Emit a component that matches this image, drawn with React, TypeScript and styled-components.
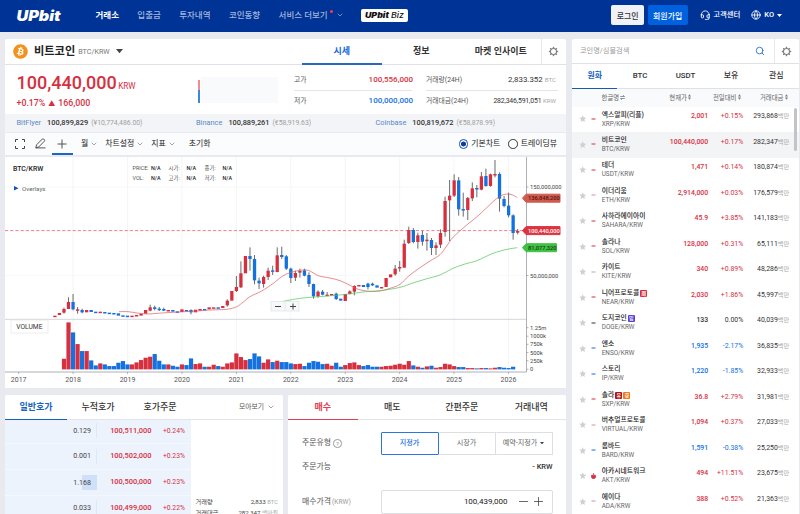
import React from "react";
import styled, { createGlobalStyle, css } from "styled-components";
import { Headset, Globe, ChevronDown, Search } from "lucide-react";
import { FaBitcoin } from "react-icons/fa";

const RED = "#d6303f";
const BLUE = "#1371e0";
const FONT = `Roboto, "Noto Sans CJK KR", sans-serif`;

const GlobalStyle = createGlobalStyle`
  * { box-sizing: border-box; }
  body { margin: 0; overflow: hidden; background: #e8eaef; font-family: ${FONT}; color: #333; }
`;

const Page = styled.div`
  width: 800px;
  height: 514px;
  overflow: hidden;
  background: #e8eaef;
  font-size: 6.8px;
  line-height: 10px;
  white-space: nowrap;
`;

/* ---------- Header ---------- */
const Header = styled.header`
  height: 32px;
  padding: 0 18px 0 16px;
  background: #003396;
  display: flex;
  align-items: center;
  color: #fff;
`;
const Logo = styled.svg`
  width: 47px;
  height: 20px;
  margin-right: 32.5px;
  overflow: visible;
  fill: #fff;
`;
const Nav = styled.nav`
  display: flex;
  gap: 18.4px;
  font-size: 8.5px;
  margin-top: -3px;
`;
const NavItem = styled.a<{ $active?: boolean }>`
  color: ${(p) => (p.$active ? "#fff" : "#a3b6dc")};
  font-weight: ${(p) => (p.$active ? 700 : 500)};
  display: flex;
  align-items: center;
`;
const NewDot = styled.i`
  width: 3px;
  height: 3px;
  margin: -7px 3px 0 2px;
  border-radius: 50%;
  background: #ee4052;
`;
const BizBadge = styled.svg`
  width: 47px;
  height: 13px;
  margin: -2px 0 0 17px;
  border-radius: 2px;
  background: #fff;
`;
const HeaderTools = styled.div`
  margin: -2px 0 0 auto;
  display: flex;
  align-items: center;
  font-size: 7.4px;
  font-weight: 500;
`;
const HeaderButton = styled.button<{ $primary?: boolean }>`
  width: ${(p) => (p.$primary ? 40 : 33)}px;
  height: 20px;
  margin-right: ${(p) => (p.$primary ? 12 : 3.5)}px;
  padding: 0;
  border: 0;
  border-radius: 2px;
  background: ${(p) => (p.$primary ? "#0061df" : "#f0f2f7")};
  color: ${(p) => (p.$primary ? "#fff" : "#333")};
  font: 500 7.9px ${FONT};
`;
const ToolLink = styled.span`
  display: flex;
  align-items: center;
  gap: 3px;
  margin-right: 11px;
  &:last-child { margin-right: 0; }
`;

/* ---------- Layout ---------- */
const Columns = styled.main`
  display: grid;
  grid-template-columns: 561px 227px;
  column-gap: 6px;
  padding: 7px 0 0 5px;
  height: 482px;
`;
const MainColumn = styled.div`
  display: flex;
  flex-direction: column;
`;
const Card = styled.section`
  background: #fff;
  border-radius: 2px 2px 0 0;
`;

/* ---------- Coin title ---------- */
const TitleBar = styled.div`
  height: 26px;
  display: flex;
  border-bottom: 1px solid #dfe1e6;
`;
const CoinName = styled.div`
  width: 297px;
  padding-left: 8px;
  display: flex;
  align-items: center;
  font-size: 11.2px;
  font-weight: 500;
  color: #222;
  svg { flex: none; }
`;
const CoinLabel = styled.b`
  margin: 0 3px 0 6px;
  font-weight: 700;
`;
const CoinPair = styled.span`
  font-size: 7.2px;
  font-weight: 400;
  color: #777;
  margin: 1px 6px 0 0;
`;
const MainTab = styled.div<{ $active?: boolean }>`
  width: ${(p) => (p.$active ? 80 : 79.5)}px;
  height: 26px;
  line-height: 25px;
  text-align: center;
  font-size: 9px;
  font-weight: 700;
  color: ${(p) => (p.$active ? "#1368dc" : "#333")};
  border-bottom: ${(p) => (p.$active ? "2px solid #2a67be" : "0")};
`;
const GearCell = styled.div`
  width: 25.5px;
  border-left: 1px solid #e6e8ec;
  display: grid;
  place-items: center;
`;

/* ---------- Price summary ---------- */
const Summary = styled.div`
  height: 49px;
  display: flex;
`;
const PriceBlock = styled.div`
  width: 193px;
  padding: 8px 0 0 11.5px;
  color: ${RED};
`;
const BigPrice = styled.div`
  font-size: 18px;
  line-height: 20px;
  font-weight: 500;
`;
const BigUnit = styled.span`
  font-size: 8.2px;
  font-weight: 400;
  margin-left: 1.5px;
`;
const ChangeLine = styled.div`
  font-size: 8.8px;
  line-height: 14px;
  font-weight: 500;
  margin-top: 0;
  small { font-size: 7px; margin: 0 3px; }
`;
const RangeBar = styled.div`
  width: 1.6px;
  height: 23px;
  margin-top: 15px;
  background: linear-gradient(#ee8b93 44%, #3e86dc 44%);
`;
const SparkArea = styled.div`
  width: 77px;
  height: 26px;
  margin: 12px 16px 0 1.5px;
  background: #f9fafc;
`;
const Stats = styled.div`
  width: 118px;
  margin-right: 14px;
  &:last-child { width: 132px; margin: 0; }
`;
const Stat = styled.div`
  height: 20px;
  display: flex;
  justify-content: space-between;
  align-items: center;
  color: #555;
  &:first-child { height: 26px; padding-top: 5px; border-bottom: 1px solid #e3e5e9; }
`;
const StatValue = styled.span<{ $color?: string; $small?: boolean }>`
  color: ${(p) => p.$color ?? "#333"};
  font-size: ${(p) => (p.$color ? 8 : p.$small ? 6.9 : 7.9)}px;
  font-weight: ${(p) => (p.$color ? 500 : 400)};
  letter-spacing: ${(p) => (p.$small ? "-0.17px" : "0")};
  margin-right: ${(p) => (p.$color ? -1 : 2)}px;
  small { font-size: 6.2px; color: #aaa; letter-spacing: 0; }
`;

/* ---------- Foreign exchanges ---------- */
const ExchangeBar = styled.div`
  height: 18px;
  display: grid;
  grid-template-columns: 179.5px 179.5px 1fr;
  padding-left: 11.5px;
  align-items: center;
  background: #f3f4f7;
`;
const Exchange = styled.span`
  display: flex;
  gap: 6px;
  font-size: 7.4px;
  color: #5a8ac6;
  b { color: #333; font-weight: 500; }
  small { font-size: 6.85px; color: #a0a0a0; margin-left: -3px; }
`;

/* ---------- Chart toolbar ---------- */
const Toolbar = styled.div`
  height: 22.5px;
  margin-top: 0.5px;
  padding: 0 9px 0 9.5px;
  display: flex;
  align-items: center;
  background: #fbfcfe;
  font-size: 7.9px;
  color: #222;
`;
const ToolIcon = styled.span<{ $active?: boolean }>`
  width: 21.5px;
  height: 22.5px;
  display: grid;
  place-items: center;
  padding-top: 2px;
  border-bottom: 2px solid ${(p) => (p.$active ? "#1d66c4" : "transparent")};
  margin-right: ${(p) => (p.$active ? 8 : 0)}px;
  &:first-child { width: 20px; margin-left: -4.5px; margin-right: 0; }
`;
const ToolMenu = styled.span`
  display: flex;
  align-items: center;
  gap: 2px;
  margin-right: 7px;
  padding-top: 1px;
`;
const ResetButton = styled.span`
  margin-left: 6px;
  padding-top: 1px;
`;
const RadioLabel = styled.label<{ $first?: boolean }>`
  display: flex;
  align-items: center;
  gap: 3px;
  margin-left: ${(p) => (p.$first ? "auto" : "8px")};
`;
const Radio = styled.i<{ $on?: boolean }>`
  width: 9.5px;
  height: 9.5px;
  border-radius: 50%;
  border: 1px solid ${(p) => (p.$on ? "#0d4fb5" : "#333")};
  ${(p) =>
    p.$on &&
    css`
      background: radial-gradient(circle, #0b3f9b 42%, #fff 52%);
    `}
`;

const ChartCard = styled.section`
  height: 231px;
  margin-top: 2px;
  background: #fff;
`;
const ChartSvg = styled.svg`
  display: block;
  width: 561px;
  height: 231px;
  font-family: ${FONT};
`;

/* ---------- Bottom ---------- */
const BottomRow = styled.div`
  margin-top: 7px;
  flex: 1;
  display: grid;
  grid-template-columns: 278px 278px;
  column-gap: 5px;
`;
const SubTabs = styled.div`
  height: 25px;
  display: flex;
  border-bottom: 1px solid #e2e4e9;
`;
const SubTab = styled.div<{ $w: number; $color?: string }>`
  width: ${(p) => p.$w}px;
  height: 25px;
  line-height: 24px;
  text-align: center;
  font-size: 9px;
  font-weight: ${(p) => (p.$color ? 700 : 500)};
  color: ${(p) => p.$color ?? "#333"};
  border-bottom: ${(p) => (p.$color ? `1.6px solid ${p.$color}` : "0")};
`;
const ViewMenu = styled.div`
  margin-left: auto;
  padding-right: 8px;
  display: flex;
  align-items: center;
  gap: 3px;
  color: #555;
`;
const BookBody = styled.div`
  display: flex;
  height: 100px;
`;
const BookTable = styled.div`
  width: 185.5px;
  background: #edf3fd;
`;
const BookRow = styled.div`
  height: 25.8px;
  margin-top: -1.8px;
  & + & { margin-top: 0; }
  display: grid;
  grid-template-columns: 86px 5.5px 60px 28.5px;
  align-items: center;
  text-align: right;
  color: ${RED};
  font-size: 6.8px;
  border-bottom: 1px solid #f3f7fe;
`;
const Amount = styled.span<{ $fill?: number }>`
  font-size: 7.1px;
  color: #444;
  ${(p) =>
    p.$fill &&
    css`
      line-height: 15px;
      background: linear-gradient(#cfe0f8, #cfe0f8) right / ${p.$fill}px 15px no-repeat;
    `}
`;
const AmountEdge = styled.i<{ $fill?: boolean }>`
  height: 15px;
  border-right: 1.5px solid ${(p) => (p.$fill ? "#cfe0f8" : "#dde8fa")};
  background: ${(p) => (p.$fill ? "#cfe0f8" : "none")};
`;
const AskPrice = styled.span`
  font-size: 7.45px;
  font-weight: 500;
  padding-right: 5px;
`;
const BookSide = styled.div`
  flex: 1;
  padding: 77px 5px 0;
`;
const SideLine = styled.div`
  display: flex;
  justify-content: space-between;
  height: 11px;
  color: #444;
  font-size: 6.2px;
  small { font-size: 5.8px; color: #aaa; }
`;
const Form = styled.div`
  padding: 12px 13.5px 0 14px;
  color: #555;
  font-size: 7.9px;
`;
const FormRow = styled.div<{ $h: number; $mb?: number }>`
  height: ${(p) => p.$h}px;
  margin-bottom: ${(p) => p.$mb ?? 0}px;
  display: flex;
  align-items: center;
  justify-content: space-between;
  small { font-size: 6.6px; color: #999; margin-left: 1px; }
`;
const FieldLabel = styled.span`
  display: flex;
  align-items: center;
`;
const HelpMark = styled.i`
  flex: none;
  width: 8.5px;
  height: 8.5px;
  margin-left: 2px;
  border: 0.8px solid #999;
  border-radius: 50%;
  font: 6px/7px ${FONT};
  text-align: center;
  color: #888;
`;
const Segments = styled.div`
  width: 172px;
  height: 22.5px;
  display: flex;
  font-size: 7.1px;
`;
const Segment = styled.span<{ $on?: boolean }>`
  flex: 1;
  display: flex;
  align-items: center;
  justify-content: center;
  gap: 3px;
  padding-bottom: 1px;
  border: 1px solid ${(p) => (p.$on ? "#2a78df" : "#dcdee3")};
  color: ${(p) => (p.$on ? "#2371dd" : "#666")};
  font-weight: ${(p) => (p.$on ? 500 : 400)};
  &:not(:first-child) { border-left-width: 0; }
  border-radius: 1px;
`;
const Balance = styled.b`
  font-size: 7.4px;
  font-weight: 500;
  color: #333;
`;
const PriceInput = styled.div`
  width: 172px;
  height: 23.5px;
  padding-right: 9px;
  border: 1px solid #dcdee3;
  border-radius: 2px;
  display: flex;
  align-items: center;
  justify-content: flex-end;
  color: #222;
  font-size: 8px;
  svg { margin-left: 11px; }
  svg + svg { margin-left: 6px; }
`;

/* ---------- Market list ---------- */
const MarketCard = styled(Card)`
  height: 475px;
  overflow: hidden;
`;
const SearchBar = styled.div`
  height: 25px;
  display: flex;
  border-bottom: 1px solid #dfe1e6;
  color: #9a9a9a;
  font-size: 7.2px;
`;
const SearchField = styled.div`
  flex: 1;
  padding: 0 9px 0 8px;
  display: flex;
  align-items: center;
  justify-content: space-between;
`;
const MarketTabs = styled.div`
  height: 24.5px;
  display: grid;
  grid-template-columns: repeat(5, 1fr);
  border-bottom: 1px solid #dfe1e6;
`;
const MarketTab = styled.div<{ $active?: boolean }>`
  height: 24.5px;
  line-height: 23.5px;
  text-align: center;
  font-size: 7.9px;
  font-weight: ${(p) => (p.$active ? 700 : 500)};
  color: ${(p) => (p.$active ? "#1560bd" : "#333")};
  border-bottom: ${(p) => (p.$active ? "1.6px solid #155ab5" : "0")};
`;
const ListHead = styled.div`
  height: 18.5px;
  display: grid;
  grid-template-columns: 29.5px 89.5px 49.5px 47px;
  align-items: center;
  background: #f9fafc;
  color: #666;
  font-size: 6.4px;
  text-align: right;
  svg { margin-left: 1px; vertical-align: -0.5px; }
  & > :nth-child(2) { display: flex; justify-content: space-between; }
`;
const ListWrap = styled.div`
  position: relative;
`;
const ScrollThumb = styled.i`
  position: absolute;
  right: 2px;
  top: 1px;
  width: 3px;
  height: 43px;
  border-radius: 2px;
  background: #c2c4c8;
`;
const CoinRow = styled.div<{ $selected?: boolean }>`
  height: 25.49px;
  display: grid;
  grid-template-columns: 7px 12px 10.7px 60px 46.5px 35px 46px;
  background: ${(p) => (p.$selected ? "#f3f4f6" : "#fff")};
  font-size: 6.9px;
  text-align: right;
`;
const RowMark = styled.span`
  height: 24px;
  display: flex;
  align-items: center;
`;
const Names = styled.span`
  text-align: left;
  padding-top: 3.5px;
`;
const KrName = styled.div`
  font-size: 6.8px;
  font-weight: 500;
  line-height: 9px;
  height: 9px;
  color: #222;
  display: flex;
  align-items: center;
`;
const SubPair = styled.div`
  font-size: 6.4px;
  line-height: 9px;
  color: #666;
`;
const Badge = styled.i<{ $bg: string }>`
  width: 7px;
  height: 7px;
  margin-left: 1px;
  border-radius: 1px;
  background: ${(p) => p.$bg};
  color: #fff;
  font: 500 5px/6.5px ${FONT};
  text-align: center;
`;
const Figure = styled.span<{ $color: string; $strong?: boolean }>`
  padding-top: 4.3px;
  color: ${(p) => p.$color};
  font-weight: ${(p) => (p.$strong ? 500 : 400)};
  small { font-size: 6.2px; color: #aaa; }
`;

/* ---------- Icons ---------- */
const Gear = () => (
  <svg width="11" height="11" viewBox="-6 -6 12 12" fill="none" stroke="#808080">
    <circle r="3.3" strokeWidth="1.2" />
    {[0, 45, 90, 135, 180, 225, 270, 315].map((a) => (
      <path key={a} d="M0-3.6V-5.1" strokeWidth="1.5" transform={`rotate(${a})`} />
    ))}
  </svg>
);
const Caret = ({ color, w = 6 }: { color: string; w?: number }) => (
  <svg width={w} height={w * 0.6} viewBox="0 0 10 6">
    <path d="M0 0H10L5 6Z" fill={color} />
  </svg>
);
const Chevron = ({ color = "#777" }: { color?: string }) => (
  <ChevronDown size={8} color={color} strokeWidth={2} />
);
const Sort = () => (
  <svg width="3" height="6" viewBox="0 0 3 6" fill="#777">
    <path d="M0 2.4L1.5.2L3 2.4ZM0 3.6L1.5 5.8L3 3.6Z" />
  </svg>
);
const Star = () => (
  <svg width="7.500" height="7.500" viewBox="0 0 24 24" fill="#cfd0d3">
    <path d="M12 1l3.3 7.2 7.7.9-5.7 5.3 1.5 7.8L12 18.3l-6.800 3.900 1.500-7.800L1 9.100l7.700-.9z" />
  </svg>
);

/* ---------- Chart data: [direction, body top, body bottom, high, low], in thirds of a pixel ---------- */
type Candle = [string, number, number, number?, number?];
const candles: Candle[] = [
  ["u", 482, 486], ["u", 474, 480], ["u", 462, 473, 458, 476], ["u", 441, 462, 427, 462],
  ["d", 441, 463, 417, 466], ["u", 463, 465, 456, 476], ["d", 465, 472, 461, 475], ["u", 465, 472],
  ["d", 465, 471], ["d", 470, 474], ["u", 470, 474], ["d", 471, 474], ["d", 473, 476], ["d", 474, 477],
  ["d", 475, 482], ["d", 481, 485], ["d", 482, 486], ["u", 482, 486], ["u", 480, 484], ["u", 476, 482],
  ["u", 465, 476], ["u", 457, 467, 449, 469], ["d", 457, 462, 452, 466], ["d", 461, 465, 456, 468],
  ["d", 462, 467, 458, 468], ["u", 465, 469], ["d", 465, 470], ["d", 469, 473], ["u", 463, 471],
  ["d", 465, 469], ["d", 465, 472, 463, 478], ["u", 464, 472], ["u", 462, 467], ["d", 462, 466],
  ["u", 457, 463], ["u", 457, 461], ["d", 457, 461], ["u", 453, 459], ["u", 437, 451, 433, 455],
  ["u", 408, 437], ["u", 396, 408, 363, 411], ["u", 355, 397, 319, 399], ["u", 303, 355],
  ["d", 303, 312, 277, 347], ["d", 312, 376, 300, 388], ["d", 377, 385, 368, 402],
  ["u", 366, 387, 362, 398], ["u", 347, 366, 338, 375], ["d", 346, 349, 332, 360],
  ["u", 301, 351, 277, 352], ["d", 300, 306, 275, 312], ["d", 304, 341, 300, 345],
  ["d", 341, 369, 338, 384], ["u", 354, 368, 347, 378], ["u", 348, 353, 341, 368],
  ["d", 346, 362, 341, 364], ["d", 360, 387, 352, 396], ["d", 387, 424, 386, 431],
  ["u", 410, 424, 406, 428], ["d", 410, 419, 405, 421], ["u", 419, 422, 411, 423], ["u", 417, 420],
  ["d", 416, 432, 413, 435], ["d", 431, 437], ["u", 417, 438], ["u", 409, 417, 406, 418],
  ["u", 393, 410, 391, 421], ["u", 390, 394], ["d", 390, 396], ["d", 386, 396, 383, 403],
  ["d", 386, 391, 383, 393], ["d", 391, 398], ["u", 396, 400], ["u", 369, 396], ["u", 358, 367],
  ["u", 341, 358, 330, 362], ["u", 336, 340, 318, 350], ["u", 266, 338, 254, 338],
  ["u", 225, 264, 215, 267], ["d", 225, 261, 219, 265], ["u", 241, 261, 233, 281],
  ["d", 240, 260, 228, 272], ["u", 254, 257, 234, 287], ["d", 255, 279, 249, 300],
  ["u", 271, 279, 262, 300], ["u", 234, 269, 223, 279], ["u", 138, 231, 125, 245],
  ["u", 122, 136, 75, 258], ["u", 76, 122, 58, 126], ["d", 76, 163, 66, 182],
  ["d", 162, 165, 113, 185], ["u", 129, 165, 126, 195], ["u", 100, 130, 82, 138],
  ["d", 99, 102, 90, 127], ["u", 64, 104, 51, 106], ["d", 63, 93, 41, 95], ["u", 58, 93, 56, 95],
  ["u", 57, 60, 15, 67], ["d", 57, 131, 52, 170], ["d", 132, 153, 123, 157], ["d", 152, 181, 113, 187],
  ["d", 181, 234, 178, 254], ["u", 228, 233, 222, 238],
];
const volumes = [
  0, 0, 32, 141, 111, 76, 55, 55, 27, 12, 18, 15, 10, 10, 20, 25, 15, 15, 21, 28, 35, 38, 46, 26, 15, 15, 11, 8,
  15, 13, 33, 16, 18, 8, 8, 14, 10, 8, 18, 21, 48, 37, 28, 31, 48, 39, 20, 30, 22, 26, 22, 22, 18, 16, 17, 10,
  20, 25, 23, 16, 17, 11, 20, 8, 13, 19, 21, 13, 10, 13, 8, 8, 8, 10, 11, 14, 17, 14, 25, 12, 8, 5, 9, 11, 5, 7,
  17, 15, 10, 7, 7, 4, 4, 3, 4, 4, 3, 5, 7, 5, 4, 8, 0,
];
const volumeDown = new Set([23, 24, 58]);
const toY = (v: number) => 155 + v / 3;
const candleX = (i: number) => 54.9 + 4.537 * i;

type Pt = [number, number];
const shortMa: Pt[] = [
  [119, 470], [128, 470], [137, 474], [147, 477], [157, 475], [167, 473], [197, 468], [210, 465], [226.7, 463],
  [236.7, 455], [243.3, 441], [250, 425], [261.7, 408], [273.3, 385], [281.7, 365], [290, 353], [300, 346],
  [308.3, 346], [318.3, 362], [330, 369], [340, 377], [350, 391], [358.3, 403], [370, 409], [380, 408],
  [390, 400], [400, 388], [408.7, 363], [420, 338], [430, 318], [440, 299], [446.7, 273], [453.3, 246],
  [466.7, 210], [476.7, 186], [486.7, 158], [495, 135], [501.7, 121], [508.3, 117], [513.3, 121], [517.3, 128],
];
const longMa: Pt[] = [
  [282, 440], [290, 435], [303, 429], [323, 424], [343, 419], [363, 411], [371, 409], [383, 406], [400, 397],
  [413, 384], [427, 371], [440, 360], [453, 340], [465, 327], [477, 317], [493, 295], [507, 283], [517.3, 278],
];
const linePath = (pts: Pt[]) => {
  const q = pts.map(([x, v]) => [x, toY(v)]);
  let d = `M${q[0][0]} ${q[0][1]}`;
  for (let i = 0; i < q.length - 1; i++) {
    const a = q[Math.max(i - 1, 0)], b = q[i], c = q[i + 1], e = q[Math.min(i + 2, q.length - 1)];
    d += `C${b[0] + (c[0] - a[0]) / 6} ${b[1] + (c[1] - a[1]) / 6} ${c[0] - (e[0] - b[0]) / 6} ${c[1] - (e[1] - b[1]) / 6} ${c[0]} ${c[1]}`;
  }
  return d;
};
const years = [2017, 2018, 2019, 2020, 2021, 2022, 2023, 2024, 2025, 2026];
const yearX = (i: number) => 18.7 + 54.42 * i;
const legend: [number, string][][] = [
  [[132.5, "PRICE:"], [151, "N/A"], [168.5, "시가:"], [186.5, "N/A"], [204.5, "종가:"], [222.5, "N/A"]],
  [[132.5, "VOL:"], [151, "N/A"], [168.5, "고가:"], [186.5, "N/A"], [204.5, "저가:"], [222.5, "N/A"]],
];
const scaleLabels: [number, string][] = [
  [187, "150,000,000"], [275.5, "50,000,000"], [327.7, "1.25m"], [336.2, "1000k"],
  [344.3, "750k"], [352.5, "500k"], [360.7, "250k"], [369.3, "0"],
];
const priceTags: [number, string, string, string, number][] = [
  [198.2, "136,848,200", "#cf5a4e", "#5a1512", 560],
  [230.6, "100,440,000", "#dd3340", "#fff", 560],
  [247.7, "81,077,320", "#42c043", "#0d4310", 556.5],
];

const Chart = () => (
  <ChartSvg viewBox="5 157 561 231">
    <g stroke="#f1f2f5" strokeWidth="0.8">
      {years.map((y, i) => i > 0 && <path key={y} d={`M${yearX(i)} 157V372`} />)}
      <path d="M5 187H526M5 275.5H526" stroke="#f5f6f8" />
    </g>
    <path d="M5 319.3H526" stroke="#d3d5da" />
    <path d="M526.5 157V372M5 372H526.5" stroke="#999ca3" strokeWidth="0.8" fill="none" />
    <path d="M5 230.6H526" stroke="#e26570" strokeWidth="0.8" strokeDasharray="3.2 2" />
    {candles.map(([dir, t, b, h, l], i) => {
      const x = candleX(i);
      const fill = dir === "u" ? RED : BLUE;
      const vFill = volumeDown.has(i) || dir === "d" ? BLUE : RED;
      return (
        <g key={i}>
          {h !== undefined && l !== undefined && (
            <path d={`M${x} ${toY(h)}V${toY(l)}`} stroke="#444" strokeWidth="0.8" />
          )}
          <rect x={x - 1.65} y={toY(t)} width="3.3" height={Math.max((b - t) / 3, 1.5)} fill={fill} />
          {volumes[i] > 0 && (
            <rect x={x - 2.1} y={369.4 - volumes[i] / 3} width="4.2" height={volumes[i] / 3} fill={vFill} />
          )}
        </g>
      );
    })}
    <path d={linePath(shortMa)} fill="none" stroke="#dc5b60" strokeWidth="0.7" />
    <path d={linePath(longMa)} fill="none" stroke="#4fc454" strokeWidth="0.7" />
    {years.map((y, i) => (
      <g key={y}>
        <path d={`M${yearX(i)} 372v2`} stroke="#999" strokeWidth="0.7" />
        <text x={yearX(i)} y="382.3" fill="#555" fontSize="7" textAnchor="middle">{y}</text>
      </g>
    ))}
    {scaleLabels.map(([y, t]) => (
      <g key={t}>
        <path d={`M526.5 ${y}h2`} stroke="#999" strokeWidth="0.7" />
        <text x="530" y={y + 2.1} fill="#444" fontSize="5.8">{t}</text>
      </g>
    ))}
    {priceTags.map(([y, t, bg, fg, right]) => (
      <g key={t}>
        <path d={`M522.5 ${y}L526 ${y - 4}H${right}V${y + 4}H526Z`} fill={bg} stroke={bg} strokeLinejoin="round" />
        <text x="528" y={y + 2.1} fill={fg} fontSize="5.7" fontWeight="500">{t}</text>
      </g>
    ))}
    <text x="13" y="170.8" fill="#222" fontSize="6.9" fontWeight="500">BTC/KRW</text>
    <path d="M14 186V190.5L18.5 188.2Z" fill="#0d52c6" />
    <text x="22" y="190.6" fill="#666" fontSize="6.2">Overlays</text>
    {legend.map((row, r) => (
      <g key={r} fontSize="5.4">
        {row.map(([x, t]) => (
          <text key={x} x={x} y={169.8 + r * 9.7} fill={t === "N/A" ? "#222" : "#555"} fontWeight={t === "N/A" ? 500 : 400}>{t}</text>
        ))}
      </g>
    ))}
    <rect x="11" y="320" width="37" height="13" fill="#fff" stroke="#dfe1e5" strokeWidth="0.6" />
    <text x="16.3" y="329.2" fill="#333" fontSize="6.7">VOLUME</text>
    <rect x="271" y="301.5" width="28" height="9.5" fill="#f7f8f9" stroke="#dcdee2" strokeWidth="0.6" />
    <path d="M275 306.5h6M290 306.5h6M293 303.5v6" stroke="#444" strokeWidth="1" />
    <path d="M285 301.5v9.5" stroke="#dcdee2" strokeWidth="0.6" />
  </ChartSvg>
);

/* ---------- Content data ---------- */
interface Coin { name: string; pair: string; price: string; pct: string; vol: string; badges?: [string, string][]; fire?: boolean; mark?: string }
const coins: Coin[] = [
  { name: "엑스알피(리플)", pair: "XRP/KRW", price: "2,001", pct: "+0.15%", vol: "293,868" },
  { name: "비트코인", pair: "BTC/KRW", price: "100,440,000", pct: "+0.17%", vol: "282,347" },
  { name: "테더", pair: "USDT/KRW", price: "1,471", pct: "+0.14%", vol: "180,874" },
  { name: "이더리움", pair: "ETH/KRW", price: "2,914,000", pct: "+0.03%", vol: "176,579", mark: "#e28c95" },
  { name: "사하라에이아이", pair: "SAHARA/KRW", price: "45.9", pct: "+3.85%", vol: "141,183" },
  { name: "솔라나", pair: "SOL/KRW", price: "128,000", pct: "+0.31%", vol: "65,111" },
  { name: "카이트", pair: "KITE/KRW", price: "340", pct: "+0.89%", vol: "48,286", mark: "#b9a7b0" },
  { name: "니어프로토콜", pair: "NEAR/KRW", price: "2,030", pct: "+1.86%", vol: "45,997", badges: [["#d92b3c", "周"]] },
  { name: "도지코인", pair: "DOGE/KRW", price: "133", pct: "0.00%", vol: "40,039", badges: [["#5a3fd6", "밈"]] },
  { name: "엔소", pair: "ENSO/KRW", price: "1,935", pct: "-2.17%", vol: "36,835" },
  { name: "스토리", pair: "IP/KRW", price: "1,220", pct: "-1.85%", vol: "32,933" },
  { name: "솔라", pair: "SXP/KRW", price: "36.8", pct: "+2.79%", vol: "31,981", badges: [["#b3141f", "유"], ["#ef7a1a", "경"]] },
  { name: "버추얼프로토콜", pair: "VIRTUAL/KRW", price: "1,094", pct: "+0.37%", vol: "27,033", mark: "#e28c95" },
  { name: "롬바드", pair: "BARD/KRW", price: "1,591", pct: "-0.38%", vol: "25,250" },
  { name: "아카시네트워크", pair: "AKT/KRW", price: "494", pct: "+11.51%", vol: "23,675", fire: true },
  { name: "에이다", pair: "ADA/KRW", price: "388", pct: "+0.52%", vol: "21,363", mark: "#e28c95" },
];
const trendColor = (pct: string) => (pct[0] === "+" ? RED : pct[0] === "-" ? BLUE : "#333");
const asks: [string, string, string, number][] = [
  ["0.129", "100,511,000", "+0.24%", 0],
  ["0.001", "100,502,000", "+0.23%", 0],
  ["1.168", "100,500,000", "+0.23%", 9],
  ["0.033", "100,499,000", "+0.22%", 0],
];

export default function App() {
  return (
    <Page>
      <GlobalStyle />
      <Header>
        <Logo viewBox="0 0 47 20">
          <text x="0.5" y="14.6" fontFamily="Inter" fontWeight="900" fontStyle="italic" fontSize="14.5" textLength="44" lengthAdjust="spacingAndGlyphs">UPbit</text>
        </Logo>
        <Nav>
          <NavItem $active>거래소</NavItem>
          <NavItem>입출금</NavItem>
          <NavItem>투자내역</NavItem>
          <NavItem>코인동향</NavItem>
          <NavItem>서비스 더보기<NewDot /><Chevron color="#a3b6dc" /></NavItem>
        </Nav>
        <BizBadge viewBox="0 0 47 13">
          <text x="4" y="9.2" fontFamily="Inter" fontWeight="900" fontStyle="italic" fontSize="7.5" textLength="24" lengthAdjust="spacingAndGlyphs" fill="#111">UPbit</text>
          <text x="30" y="9.2" fontFamily="Inter" fontWeight="500" fontStyle="italic" fontSize="7.5" textLength="13" lengthAdjust="spacingAndGlyphs" fill="#111">Biz</text>
        </BizBadge>
        <HeaderTools>
          <HeaderButton>로그인</HeaderButton>
          <HeaderButton $primary>회원가입</HeaderButton>
          <ToolLink><Headset size={10.5} strokeWidth={2} />고객센터</ToolLink>
          <ToolLink><Globe size={10} strokeWidth={2} />KO<Caret color="#fff" w={5} /></ToolLink>
        </HeaderTools>
      </Header>

      <Columns>
        <MainColumn>
          <Card>
            <TitleBar>
              <CoinName>
                <FaBitcoin size={15} color="#f2921d" />
                <CoinLabel>비트코인</CoinLabel>
                <CoinPair>BTC/KRW</CoinPair>
                <Caret color="#444" w={7} />
              </CoinName>
              <MainTab $active>시세</MainTab>
              <MainTab>정보</MainTab>
              <MainTab>마켓 인사이트</MainTab>
              <GearCell><Gear /></GearCell>
            </TitleBar>
            <Summary>
              <PriceBlock>
                <BigPrice>100,440,000<BigUnit>KRW</BigUnit></BigPrice>
                <ChangeLine>+0.17%<small>▲</small>166,000</ChangeLine>
              </PriceBlock>
              <RangeBar />
              <SparkArea />
              <Stats>
                <Stat>고가<StatValue $color={RED}>100,556,000</StatValue></Stat>
                <Stat>저가<StatValue $color={BLUE}>100,000,000</StatValue></Stat>
              </Stats>
              <Stats>
                <Stat>거래량(24H)<StatValue>2,833.352 <small>BTC</small></StatValue></Stat>
                <Stat>거래대금(24H)<StatValue $small>282,346,591,051 <small>KRW</small></StatValue></Stat>
              </Stats>
            </Summary>
            <ExchangeBar>
              <Exchange>BitFlyer<b>100,899,829</b><small>(¥10,774,486.00)</small></Exchange>
              <Exchange>Binance<b>100,889,261</b><small>(€58,919.63)</small></Exchange>
              <Exchange>Coinbase<b>100,819,672</b><small>(€58,878.99)</small></Exchange>
            </ExchangeBar>
          </Card>
          <Toolbar>
            <ToolIcon>
              <svg width="10" height="10" viewBox="0 0 10 10" fill="none" stroke="#444">
                <path d="M.5 3V.5H3M7 .5H9.5V3M9.5 7V9.5H7M3 9.5H.5V7" />
              </svg>
            </ToolIcon>
            <ToolIcon>
              <svg width="11" height="11" viewBox="0 0 11 11" fill="none" stroke="#444" strokeWidth="0.9" strokeLinejoin="round">
                <path d="M.8 9.8L1.6 6.8L7.3 1Q8 .4 8.7 1L9.5 1.9Q10 2.6 9.4 3.2L3.7 9ZM.8 9.9H10.5" />
              </svg>
            </ToolIcon>
            <ToolIcon $active>
              <svg width="10" height="10" viewBox="0 0 10 10" stroke="#444">
                <path d="M5 .5V9.5M.5 5H9.5" strokeWidth="0.9" />
              </svg>
            </ToolIcon>
            <ToolMenu>월<Chevron /></ToolMenu>
            <ToolMenu>차트설정<Chevron /></ToolMenu>
            <ToolMenu>지표<Chevron /></ToolMenu>
            <ResetButton>초기화</ResetButton>
            <RadioLabel $first><Radio $on />기본차트</RadioLabel>
            <RadioLabel><Radio />트레이딩뷰</RadioLabel>
          </Toolbar>
          <ChartCard><Chart /></ChartCard>

          <BottomRow>
            <Card>
              <SubTabs>
                <SubTab $w={62} $color="#1462bd">일반호가</SubTab>
                <SubTab $w={62}>누적호가</SubTab>
                <SubTab $w={62}>호가주문</SubTab>
                <ViewMenu>모아보기<Chevron /></ViewMenu>
              </SubTabs>
              <BookBody>
                <BookTable>
                  {asks.map(([amount, price, pct, fill]) => (
                    <BookRow key={price}>
                      <Amount $fill={fill || undefined}>{amount}</Amount>
                      <AmountEdge $fill={fill > 0} />
                      <AskPrice>{price}</AskPrice>
                      <span>{pct}</span>
                    </BookRow>
                  ))}
                </BookTable>
                <BookSide>
                  <SideLine>거래량<span>2,833 <small>BTC</small></span></SideLine>
                  <SideLine>거래대금<span>282,347 <small>백만원</small></span></SideLine>
                </BookSide>
              </BookBody>
            </Card>
            <Card>
              <SubTabs>
                <SubTab $w={69.5} $color="#e04050">매수</SubTab>
                <SubTab $w={69.5}>매도</SubTab>
                <SubTab $w={69.5}>간편주문</SubTab>
                <SubTab $w={69.5}>거래내역</SubTab>
              </SubTabs>
              <Form>
                <FormRow $h={22.5}>
                  <FieldLabel>주문유형<HelpMark>?</HelpMark></FieldLabel>
                  <Segments>
                    <Segment $on>지정가</Segment>
                    <Segment>시장가</Segment>
                    <Segment>예약-지정가<Caret color="#444" w={4} /></Segment>
                  </Segments>
                </FormRow>
                <FormRow $h={24} $mb={11.5}>
                  <FieldLabel>주문가능</FieldLabel>
                  <Balance>- KRW</Balance>
                </FormRow>
                <FormRow $h={23.5}>
                  <FieldLabel>매수가격<small>(KRW)</small></FieldLabel>
                  <PriceInput>
                    100,439,000
                    <svg width="9" height="9" viewBox="0 0 9 9" stroke="#444" strokeWidth="0.8"><path d="M0 4.5H9" /></svg>
                    <svg width="9" height="9" viewBox="0 0 9 9" stroke="#444" strokeWidth="0.8"><path d="M0 4.5H9M4.5 0V9" /></svg>
                  </PriceInput>
                </FormRow>
              </Form>
            </Card>
          </BottomRow>
        </MainColumn>

        <MarketCard>
          <SearchBar>
            <SearchField>코인명/심볼검색<Search size={10} color="#3b7ddd" strokeWidth={2.4} /></SearchField>
            <GearCell><Gear /></GearCell>
          </SearchBar>
          <MarketTabs>
            <MarketTab $active>원화</MarketTab>
            <MarketTab>BTC</MarketTab>
            <MarketTab>USDT</MarketTab>
            <MarketTab>보유</MarketTab>
            <MarketTab>관심</MarketTab>
          </MarketTabs>
          <ListHead>
            <span />
            <span>
              <span>
                한글명
                <svg width="5" height="5" viewBox="0 0 5 5" fill="none" stroke="#666" strokeWidth="0.7"><path d="M.3 1.5H4.5L3 .2M4.7 3.5H.5L2 4.8" /></svg>
              </span>
              <span>현재가<Sort /></span>
            </span>
            <span>전일대비<Sort /></span>
            <span>거래대금<Sort /></span>
          </ListHead>
          <ListWrap>
            {coins.map((c, i) => (
              <CoinRow key={c.pair} $selected={i === 1}>
                <span />
                <RowMark><Star /></RowMark>
                <RowMark>
                  {c.fire ? (
                    <svg width="5" height="6" viewBox="0 0 5 6" fill={RED}><path d="M2.5 0V2M.4 2.2H4.6V4.5L3.6 5.6H1.4L.4 4.5Z" stroke={RED} strokeWidth="0.7" /></svg>
                  ) : (
                    <svg width="5" height="2" viewBox="0 0 5 2"><path d="M.5 1H4.5" stroke={c.mark ?? trendColor(c.pct)} /></svg>
                  )}
                </RowMark>
                <Names>
                  <KrName>
                    {c.name}
                    {c.badges?.map(([bg, t]) => <Badge key={t} $bg={bg}>{t}</Badge>)}
                  </KrName>
                  <SubPair>{c.pair}</SubPair>
                </Names>
                <Figure $color={trendColor(c.pct)} $strong>{c.price}</Figure>
                <Figure $color={trendColor(c.pct)}>{c.pct}</Figure>
                <Figure $color="#333">{c.vol}<small>백만</small></Figure>
              </CoinRow>
            ))}
            <ScrollThumb />
          </ListWrap>
        </MarketCard>
      </Columns>
    </Page>
  );
}
